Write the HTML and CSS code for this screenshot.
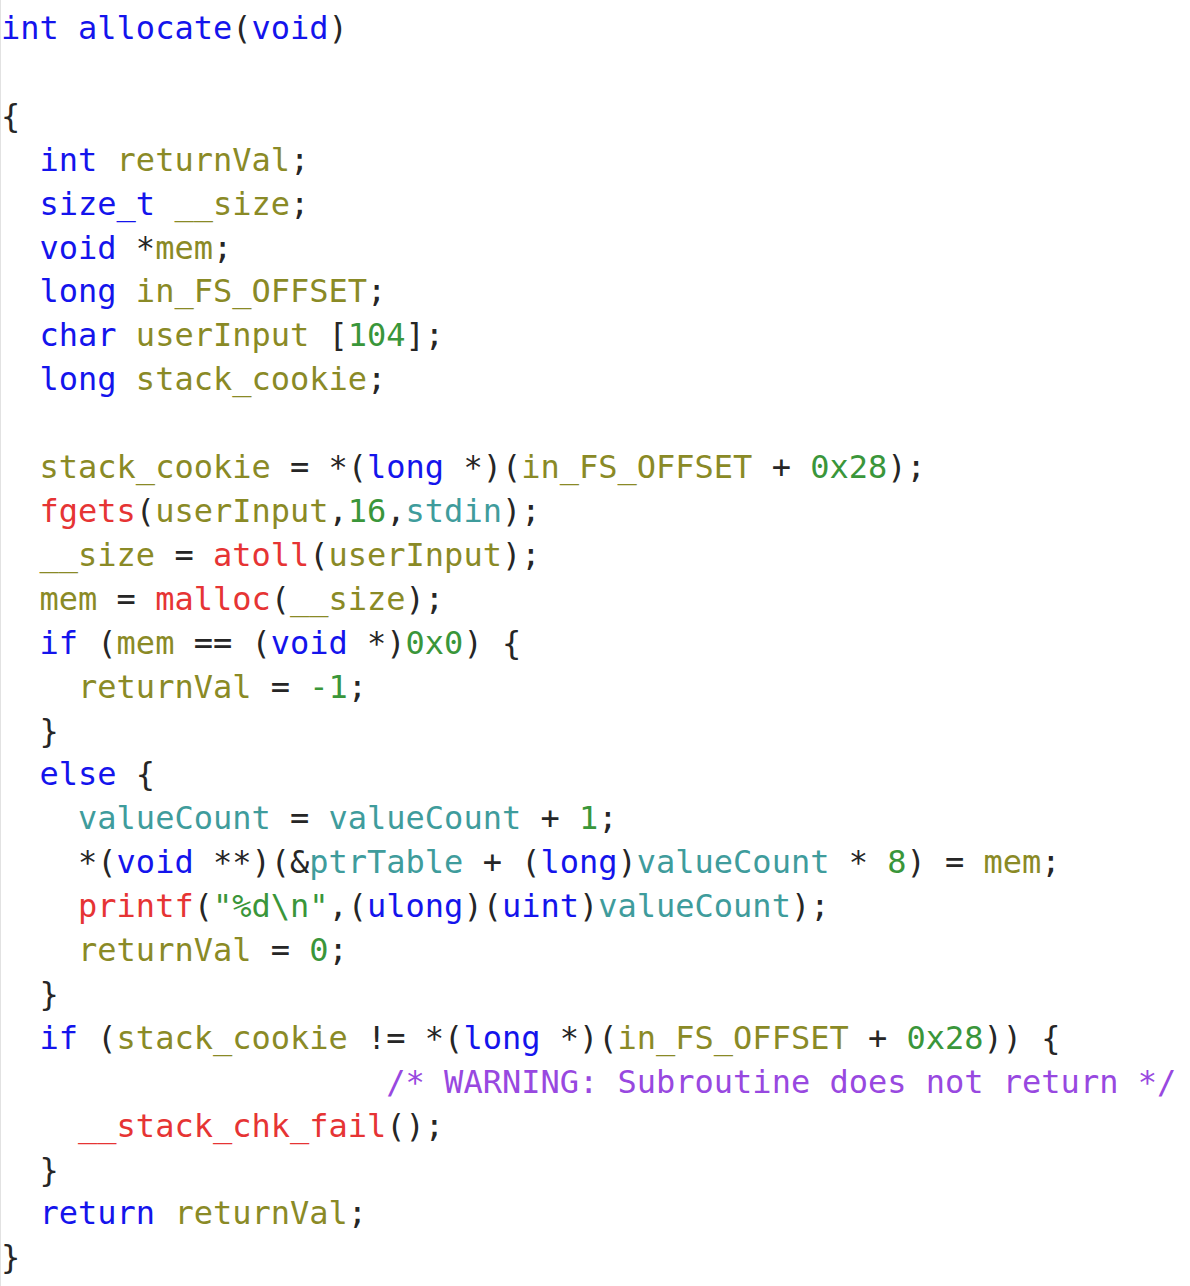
FILE: index.html
```html
<!DOCTYPE html>
<html>
<head>
<meta charset="utf-8">
<link rel="stylesheet" href="styles.css">
</head>
<body>
<pre class="code"><span class="k">int</span> <span class="k">allocate</span>(<span class="k">void</span>)

{
  <span class="k">int</span> <span class="v">returnVal</span>;
  <span class="k">size_t</span> <span class="v">__size</span>;
  <span class="k">void</span> *<span class="v">mem</span>;
  <span class="k">long</span> <span class="v">in_FS_OFFSET</span>;
  <span class="k">char</span> <span class="v">userInput</span> [<span class="c">104</span>];
  <span class="k">long</span> <span class="v">stack_cookie</span>;

  <span class="v">stack_cookie</span> = *(<span class="k">long</span> *)(<span class="v">in_FS_OFFSET</span> + <span class="c">0x28</span>);
  <span class="f">fgets</span>(<span class="v">userInput</span>,<span class="c">16</span>,<span class="g">stdin</span>);
  <span class="v">__size</span> = <span class="f">atoll</span>(<span class="v">userInput</span>);
  <span class="v">mem</span> = <span class="f">malloc</span>(<span class="v">__size</span>);
  <span class="k">if</span> (<span class="v">mem</span> == (<span class="k">void</span> *)<span class="c">0x0</span>) {
    <span class="v">returnVal</span> = <span class="c">-1</span>;
  }
  <span class="k">else</span> {
    <span class="g">valueCount</span> = <span class="g">valueCount</span> + <span class="c">1</span>;
    *(<span class="k">void</span> **)(&amp;<span class="g">ptrTable</span> + (<span class="k">long</span>)<span class="g">valueCount</span> * <span class="c">8</span>) = <span class="v">mem</span>;
    <span class="f">printf</span>(<span class="c">"%d\n"</span>,(<span class="k">ulong</span>)(<span class="k">uint</span>)<span class="g">valueCount</span>);
    <span class="v">returnVal</span> = <span class="c">0</span>;
  }
  <span class="k">if</span> (<span class="v">stack_cookie</span> != *(<span class="k">long</span> *)(<span class="v">in_FS_OFFSET</span> + <span class="c">0x28</span>)) {
                    <span class="m">/* WARNING: Subroutine does not return */</span>
    <span class="f">__stack_chk_fail</span>();
  }
  <span class="k">return</span> <span class="v">returnVal</span>;
}</pre>
</body>
</html>
```
FILE: styles.css
```css
html, body {
  margin: 0;
  padding: 0;
  background: #ffffff;
}
body {
  min-height: 1286px;
  border-left: 1px solid #e2e2e2;
  box-sizing: border-box;
}
.code {
  margin: 0;
  padding: 7px 0 0 0;
  font-family: "DejaVu Sans Mono", monospace;
  font-size: 32px;
  line-height: 43.9px;
  color: #262626;
  white-space: pre;
}
.k { color: #1414ec; }
.v { color: #8a8a26; }
.f { color: #e63434; }
.c { color: #3a963a; }
.g { color: #3f9c9c; }
.m { color: #9848e0; }
```
